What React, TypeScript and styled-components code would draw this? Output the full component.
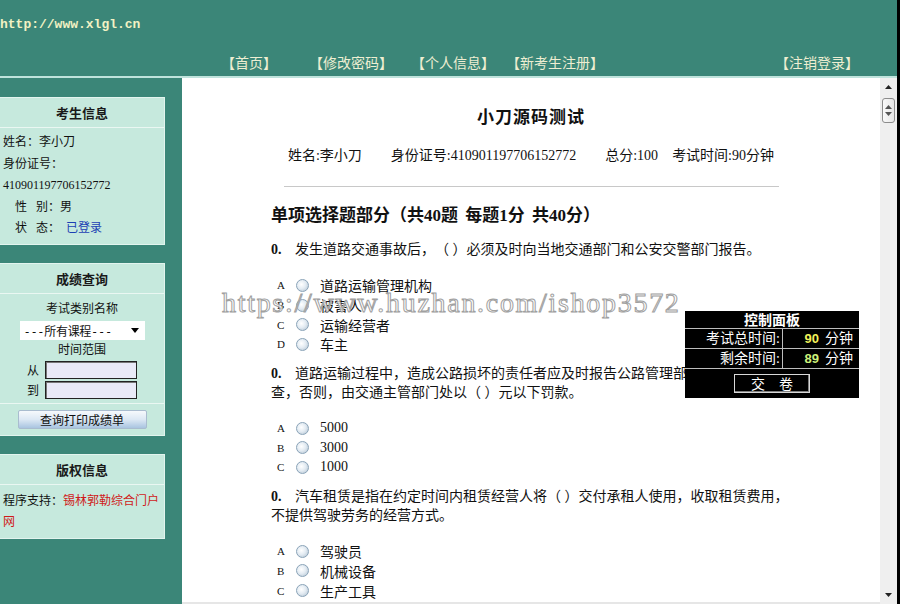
import styled, { createGlobalStyle } from 'styled-components';

const questions = [
  {
    text: '发生道路交通事故后，（ ）必须及时向当地交通部门和公安交警部门报告。',
    options: ['道路运输管理机构', '被害人', '运输经营者', '车主'],
  },
  {
    text: '道路运输过程中，造成公路损坏的责任者应及时报告公路管理部门，并接受其调查，否则，由交通主管部门处以（ ）元以下罚款。',
    options: ['5000', '3000', '1000'],
  },
  {
    text: '汽车租赁是指在约定时间内租赁经营人将（ ）交付承租人使用，收取租赁费用，不提供驾驶劳务的经营方式。',
    options: ['驾驶员', '机械设备', '生产工具'],
  },
];

const navItems = ['【首页】', '【修改密码】', '【个人信息】', '【新考生注册】', '【注销登录】'];
const letters = ['A', 'B', 'C', 'D'];

export default function App() {
  return (
    <>
      <GlobalStyle />
      <Page>
        <Frame>
          <Header>
            <SiteUrl>http://www.xlgl.cn</SiteUrl>
            <Nav>
              {navItems.map(n => (
                <NavLink key={n}>{n}</NavLink>
              ))}
            </Nav>
          </Header>

          <Body>
            <Sidebar>
              <Panel>
                <PanelHead>考生信息</PanelHead>
                <PanelBody>
                  <InfoLine>姓名：李小刀</InfoLine>
                  <InfoLine>身份证号：</InfoLine>
                  <InfoLine>410901197706152772</InfoLine>
                  <InfoLine $indent>性   别：男</InfoLine>
                  <InfoLine $indent>状   态：  <Blue>已登录</Blue></InfoLine>
                </PanelBody>
              </Panel>

              <Panel>
                <PanelHead>成绩查询</PanelHead>
                <QueryBody>
                  <Caption>考试类别名称</Caption>
                  <SelectBox>
                    <span>---所有课程---</span>
                    <svg width="8" height="5" viewBox="0 0 8 5"><path d="M0 0h8L4 5z" fill="#000" /></svg>
                  </SelectBox>
                  <Caption>时间范围</Caption>
                  <DateRow>
                    <span>从</span>
                    <DateInput />
                  </DateRow>
                  <DateRow>
                    <span>到</span>
                    <DateInput />
                  </DateRow>
                </QueryBody>
                <ButtonBar>
                  <PrintButton>查询打印成绩单</PrintButton>
                </ButtonBar>
              </Panel>

              <Panel>
                <PanelHead>版权信息</PanelHead>
                <CopyBody>
                  程序支持：<Red>锡林郭勒综合门户网</Red>
                </CopyBody>
              </Panel>
            </Sidebar>

            <Main>
              <Title>小刀源码测试</Title>
              <InfoRow>
                <span>姓名:李小刀</span>
                <span>身份证号:410901197706152772</span>
                <span>总分:100</span>
                <InfoTight>考试时间:90分钟</InfoTight>
              </InfoRow>
              <Rule />

              <Questions>
                <SectionTitle>单项选择题部分（共40题 每题1分 共40分）</SectionTitle>
                {questions.map((q, i) => (
                  <Question key={i}>
                    <QText>
                      <QNum>0.</QNum>
                      {q.text}
                    </QText>
                    <Options>
                      {q.options.map((o, j) => (
                        <Option key={o}>
                          <Letter>{letters[j]}</Letter>
                          <Radio />
                          <span>{o}</span>
                        </Option>
                      ))}
                    </Options>
                  </Question>
                ))}
              </Questions>

              <Watermark>https://www.huzhan.com/ishop3572</Watermark>

              <Control>
                <ControlTitle>控制面板</ControlTitle>
                <ControlRow>
                  <ControlLabel>考试总时间:</ControlLabel>
                  <ControlValue><Num $color="#f2f25a">90</Num>分钟</ControlValue>
                </ControlRow>
                <ControlRow>
                  <ControlLabel>剩余时间:</ControlLabel>
                  <ControlValue><Num $color="#cdf27a">89</Num>分钟</ControlValue>
                </ControlRow>
                <ControlFoot>
                  <SubmitButton>交　卷</SubmitButton>
                </ControlFoot>
              </Control>
            </Main>

            <Scrollbar>
              <ScrollArrow>
                <svg width="7" height="4" viewBox="0 0 7 4"><path d="M0 4h7L3.5 0z" fill="#222" /></svg>
              </ScrollArrow>
              <Thumb>
                <svg width="7" height="11" viewBox="0 0 7 11">
                  <path d="M0 4h7L3.5 0z" fill="#555" />
                  <path d="M0 7h7L3.5 11z" fill="#555" />
                </svg>
              </Thumb>
              <Track />
              <ScrollArrow>
                <svg width="7" height="4" viewBox="0 0 7 4"><path d="M0 0h7L3.5 4z" fill="#222" /></svg>
              </ScrollArrow>
            </Scrollbar>
          </Body>
        </Frame>
        <Edge />
      </Page>
    </>
  );
}

/* ═══ Global ═══ */

const GlobalStyle = createGlobalStyle`
  html, body {
    margin: 0;
    padding: 0;
    height: 100%;
    overflow: hidden;
  }
  body {
    font-family: 'Liberation Serif', 'Noto Sans CJK SC', serif;
    background: #fff;
    color: #111;
    text-spacing-trim: space-all;
  }
`;

/* ═══ Layout ═══ */

const Page = styled.div`
  display: flex;
  width: 900px;
  height: 604px;
`;

const Frame = styled.div`
  flex: 1;
  display: flex;
  flex-direction: column;
  min-width: 0;
`;

const Edge = styled.div`
  width: 3px;
  background: #000;
`;

const Header = styled.header`
  height: 78px;
  box-sizing: border-box;
  padding-top: 17px;
  background: #3b8678;
  border-bottom: 2px solid #bfe3dc;
`;

const SiteUrl = styled.div`
  font-family: 'Liberation Mono', monospace;
  font-weight: 700;
  font-size: 13px;
  line-height: 16px;
  color: #f2f2c4;
`;

const Nav = styled.nav`
  display: grid;
  grid-template-columns: 88px 102px 95px 269px auto;
  padding-left: 221px;
  margin-top: 19px;
`;

const NavLink = styled.span`
  font-family: 'Noto Sans CJK SC', sans-serif;
  font-size: 14px;
  line-height: 20px;
  color: #eeeed2;
  white-space: nowrap;
`;

const Body = styled.div`
  flex: 1;
  display: flex;
  min-height: 0;
`;

/* ═══ Sidebar ═══ */

const Sidebar = styled.aside`
  width: 182px;
  flex-shrink: 0;
  background: #3b8678;
  padding-top: 19px;
  box-sizing: border-box;
  display: flex;
  flex-direction: column;
  gap: 18px;
  font-size: 12px;
`;

const Panel = styled.section`
  width: 165px;
  box-sizing: border-box;
  background: #c6e9dd;
  border: 1px solid #e2f4ee;
  border-left: 0;
`;

const PanelHead = styled.div`
  height: 29px;
  line-height: 29px;
  text-align: center;
  font-family: 'Noto Sans CJK SC', sans-serif;
  font-weight: 700;
  font-size: 13px;
  color: #1a1a1a;
  border-bottom: 1px solid #eaf7f2;
  margin-bottom: 1px;
`;

const PanelBody = styled.div`
  padding: 3px 3px 4px;
`;

const InfoLine = styled.div<{ $indent?: boolean }>`
  line-height: 21.5px;
  padding-left: ${p => (p.$indent ? '12px' : '0')};
  white-space: pre;
`;

const Blue = styled.span`
  color: #1c3fb4;
`;

const QueryBody = styled.div`
  padding: 5px 0 4px;
  display: flex;
  flex-direction: column;
  align-items: center;
  border-bottom: 1px solid #eaf7f2;
`;

const Caption = styled.div`
  line-height: 18px;
`;

const SelectBox = styled.div`
  width: 125px;
  height: 19px;
  margin: 3px 0 1px;
  box-sizing: border-box;
  background: #fff;
  display: flex;
  align-items: center;
  justify-content: space-between;
  padding: 0 6px 0 4px;
  font-family: 'DejaVu Sans Mono', 'Noto Sans CJK SC', monospace;
  font-size: 12px;
  letter-spacing: -0.3px;
`;

const DateRow = styled.div`
  display: flex;
  align-items: center;
  gap: 6px;
  margin-top: 2px;
  &:first-of-type { margin-top: 3px; }
`;

const DateInput = styled.input`
  width: 92px;
  height: 18px;
  box-sizing: border-box;
  background: #e9e9f7;
  border: 1px solid #222;
  box-shadow: inset 1px 1px 0 #777;
  padding: 0;
  margin: 0;
`;

const ButtonBar = styled.div`
  padding: 6px 0 6px;
  display: flex;
  justify-content: center;
`;

const PrintButton = styled.button`
  width: 129px;
  height: 19px;
  padding: 0;
  border: 1px solid #a9bccf;
  border-radius: 2px;
  background: linear-gradient(#f6f9fc, #dce8f4 50%, #a9c4e0);
  font-family: 'Noto Sans CJK SC', sans-serif;
  font-size: 12px;
  color: #111;
`;

const CopyBody = styled.div`
  padding: 5px 3px 5px;
  line-height: 21px;
`;

const Red = styled.span`
  color: #d01a1a;
`;

/* ═══ Main ═══ */

const Main = styled.main`
  position: relative;
  flex: 1;
  overflow: hidden;
  background: #fff;
  padding-top: 27px;
  border-bottom: 2px solid #e6e6e6;
`;

const Title = styled.h1`
  margin: 0;
  text-align: center;
  font-family: 'Noto Sans CJK SC', sans-serif;
  font-size: 17px;
  font-weight: 700;
  line-height: 22px;
  letter-spacing: 1px;
`;

const InfoRow = styled.div`
  display: flex;
  justify-content: center;
  gap: 29px;
  margin-top: 19px;
  font-size: 14px;
  line-height: 20px;
`;

const InfoTight = styled.span`
  margin-left: -15px;
`;

const Rule = styled.hr`
  width: 495px;
  margin: 20px auto 0;
  border: 0;
  border-top: 1px solid #c8c8c8;
  height: 0;
`;

const Questions = styled.div`
  width: 519px;
  margin-left: 89px;
  padding-top: 18px;
`;

const SectionTitle = styled.h2`
  margin: 0 0 14px;
  font-size: 17px;
  font-weight: 700;
  line-height: 22px;
  word-spacing: 3px;
`;

const Question = styled.div`
  margin-bottom: 11px;
`;

const QText = styled.div`
  font-size: 14px;
  line-height: 18.5px;
`;

const QNum = styled.span`
  display: inline-block;
  width: 24px;
  font-weight: 700;
`;

const Options = styled.div`
  margin-top: 16px;
  padding-left: 6px;
`;

const Option = styled.div`
  display: flex;
  align-items: center;
  height: 19.7px;
  font-size: 14px;
`;

const Letter = styled.span`
  width: 19px;
  font-size: 11px;
`;

const Radio = styled.span`
  width: 11px;
  height: 11px;
  margin-right: 11px;
  border-radius: 50%;
  border: 1px solid #8aa3b8;
  background: radial-gradient(circle at 40% 40%, #ffffff 0%, #e4ecf3 45%, #aebfce 100%);
`;

const Watermark = styled.div`
  position: absolute;
  left: 40px;
  top: 211px;
  font-family: 'Liberation Serif', serif;
  font-size: 28px;
  line-height: 28px;
  letter-spacing: 1.7px;
  color: rgba(255, 255, 255, 0.75);
  -webkit-text-stroke: 1px #a0a0a0;
  white-space: nowrap;
  pointer-events: none;
`;

/* ═══ Control panel ═══ */

const Control = styled.div`
  position: absolute;
  left: 503px;
  top: 233px;
  width: 174px;
  background: #000;
  color: #fff;
  font-size: 14px;
`;

const ControlTitle = styled.div`
  height: 17px;
  line-height: 17px;
  text-align: center;
  font-family: 'Noto Sans CJK SC', sans-serif;
  font-weight: 700;
  border-bottom: 1px solid #bdbdbd;
`;

const ControlRow = styled.div`
  display: grid;
  grid-template-columns: 98px 1fr;
  height: 19px;
  line-height: 19px;
  border-bottom: 1px solid #bdbdbd;
`;

const ControlLabel = styled.div`
  text-align: right;
  padding-right: 2px;
  border-right: 1px solid #bdbdbd;
`;

const ControlValue = styled.div`
  text-align: right;
  padding-right: 6px;
`;

const Num = styled.b<{ $color: string }>`
  font-family: 'Liberation Sans', sans-serif;
  font-size: 13px;
  margin-right: 6px;
  color: ${p => p.$color};
`;

const ControlFoot = styled.div`
  height: 29px;
  display: flex;
  align-items: center;
  justify-content: center;
`;

const SubmitButton = styled.button`
  width: 76px;
  height: 19px;
  padding: 0;
  background: #000;
  color: #fff;
  border: 1px solid #d8d8d8;
  box-shadow: inset -1px -1px 0 #808080;
  font-family: 'Noto Sans CJK SC', sans-serif;
  font-size: 14px;
  line-height: 17px;
`;

/* ═══ Scrollbar ═══ */

const Scrollbar = styled.div`
  width: 17px;
  flex-shrink: 0;
  background: #efefef;
  display: flex;
  flex-direction: column;
  align-items: center;
`;

const ScrollArrow = styled.div`
  height: 18px;
  display: flex;
  align-items: center;
  justify-content: center;
`;

const Thumb = styled.div`
  width: 13px;
  height: 25px;
  margin-top: 2px;
  box-sizing: border-box;
  border: 1px solid #8c8c8c;
  border-radius: 3px;
  background: linear-gradient(90deg, #fafafa, #e6e6e6);
  display: flex;
  align-items: center;
  justify-content: center;
`;

const Track = styled.div`
  flex: 1;
`;
